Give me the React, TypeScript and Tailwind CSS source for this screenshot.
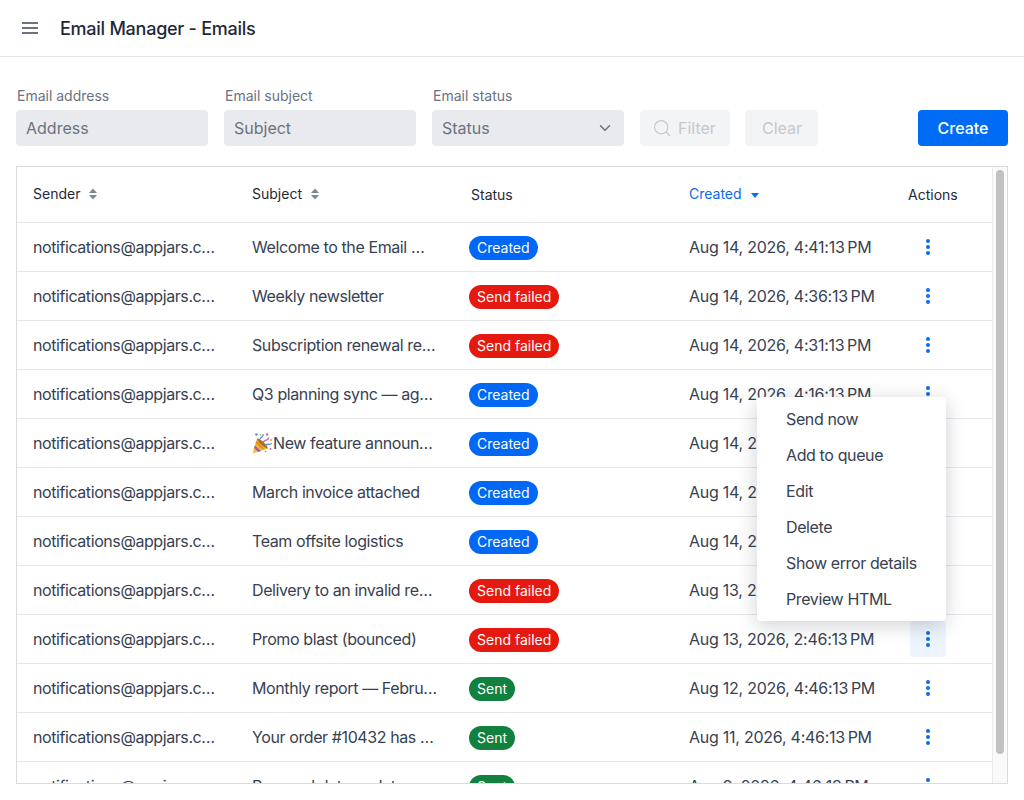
import { Search, ChevronDown } from "lucide-react";

function Popper() {
  return (
    <svg width="21" height="22" viewBox="0 0 21 22" className="-my-0.5 shrink-0">
      <path d="M0.5 21.5 L5 6.5 L16 16.5 Z" fill="#f5bc2f" />
      <path d="M3 13.5 L9 19 L6.5 20 L2 15.8 Z" fill="#9a5cc4" />
      <path d="M4.4 8.8 L12.5 16.6 L10.5 17.6 L3.7 11 Z" fill="#e58a2d" />
      <path d="M5 6.5 C8 6 15.5 13 16 16.5 C12.5 16.5 5.5 10 5 6.5 Z" fill="#a8702a" />
      <path d="M8 7 C9 4.5 12 5.5 11 2" fill="none" stroke="#4a8fe8" strokeWidth="1.3" />
      <path d="M11 10 C13 7.5 15.5 9 17 5.5" fill="none" stroke="#d85aa5" strokeWidth="1.3" />
      <path d="M13.5 13 C15.5 11.5 17 13 20 11.5" fill="none" stroke="#4a8fe8" strokeWidth="1.3" />
      <circle cx="4.5" cy="2.5" r="1.3" fill="#4a8fe8" />
      <circle cx="15" cy="2.5" r="1.2" fill="#d85aa5" />
      <circle cx="19" cy="8" r="1" fill="#e2a32e" />
      <circle cx="18.5" cy="17" r="1" fill="#d85aa5" />
      <circle cx="8.5" cy="2.8" r="0.9" fill="#e2a32e" />
      <circle cx="13.5" cy="19.5" r="0.8" fill="#4a8fe8" />
    </svg>
  );
}

function SortIcon() {
  return (
    <svg width="8" height="12" viewBox="0 0 8 12" className="ml-[9px]">
      <path d="M4 0.5 L8 5 H0 Z" fill="#7c8798" />
      <path d="M4 11.5 L8 7 H0 Z" fill="#7c8798" />
    </svg>
  );
}

function Dots() {
  return (
    <svg width="4" height="16" viewBox="0 0 4 16">
      <circle cx="2" cy="2" r="2" fill="#0a6cf0" />
      <circle cx="2" cy="8" r="2" fill="#0a6cf0" />
      <circle cx="2" cy="14" r="2" fill="#0a6cf0" />
    </svg>
  );
}

type Status = "Created" | "Send failed" | "Sent";

const rows: { subject: string; status: Status; date: string; emoji?: boolean; active?: boolean }[] = [
  { subject: "Welcome to the Email Manager", status: "Created", date: "Aug 14, 2026, 4:41:13\u202fPM" },
  { subject: "Weekly newsletter", status: "Send failed", date: "Aug 14, 2026, 4:36:13\u202fPM" },
  { subject: "Subscription renewal reminder", status: "Send failed", date: "Aug 14, 2026, 4:31:13\u202fPM" },
  { subject: "Q3 planning sync — agenda", status: "Created", date: "Aug 14, 2026, 4:16:13\u202fPM" },
  { subject: "New feature announcement", status: "Created", date: "Aug 14, 2026, 3:46:13\u202fPM", emoji: true },
  { subject: "March invoice attached", status: "Created", date: "Aug 14, 2026, 2:46:13\u202fPM" },
  { subject: "Team offsite logistics", status: "Created", date: "Aug 14, 2026, 1:46:13\u202fPM" },
  { subject: "Delivery to an invalid recipient", status: "Send failed", date: "Aug 13, 2026, 4:46:13\u202fPM" },
  { subject: "Promo blast (bounced)", status: "Send failed", date: "Aug 13, 2026, 2:46:13\u202fPM", active: true },
  { subject: "Monthly report — February", status: "Sent", date: "Aug 12, 2026, 4:46:13\u202fPM" },
  { subject: "Your order #10432 has shipped", status: "Sent", date: "Aug 11, 2026, 4:46:13\u202fPM" },
  { subject: "Personal data update", status: "Sent", date: "Aug 9, 2026, 4:46:13\u202fPM" },
];

function Badge({ status }: { status: Status }) {
  const cls =
    status === "Created" ? "bg-[#0068f5]" : status === "Sent" ? "bg-[#12803f]" : "bg-[#e5190f]";
  return (
    <span className={`inline-flex h-6 items-center rounded-full px-2 text-sm text-white ${cls}`}>
      {status}
    </span>
  );
}

const menuItems = ["Send now", "Add to queue", "Edit", "Delete", "Show error details", "Preview HTML"];

export default function App() {
  return (
    <div className="relative h-[800px] w-[1024px] overflow-hidden bg-white font-['Inter',sans-serif] text-[#1f2937]">
      <header className="flex h-[57px] items-center border-b border-[#e5e7eb] pl-[22px]">
        <svg width="16" height="14" viewBox="0 0 16 14">
          <path d="M0 2 H16 M0 7 H16 M0 12 H16" stroke="#6b7280" strokeWidth="2" />
        </svg>
        <h1 className="ml-[22px] pt-0.5 text-lg font-medium tracking-[-0.25px] text-[#1f2937]">Email Manager - Emails</h1>
      </header>

      <main className="px-4 pt-[29px]">
        <div className="flex items-end">
          <label className="w-[192px]">
            <div className="mb-[5px] pl-px text-sm leading-[19px] text-[#6b7280]">Email address</div>
            <div className="flex h-9 items-center rounded bg-[#e8eaee] px-[10px] text-base text-[#6b7280]">Address</div>
          </label>
          <label className="ml-4 w-[192px]">
            <div className="mb-[5px] pl-px text-sm leading-[19px] text-[#6b7280]">Email subject</div>
            <div className="flex h-9 items-center rounded bg-[#e8eaee] px-[10px] text-base text-[#6b7280]">Subject</div>
          </label>
          <label className="ml-4 w-[192px]">
            <div className="mb-[5px] pl-px text-sm leading-[19px] text-[#6b7280]">Email status</div>
            <div className="flex h-9 items-center justify-between rounded bg-[#e8eaee] pl-[10px] pr-[10px] text-base text-[#6b7280]">
              Status
              <ChevronDown size={18} strokeWidth={2} className="text-[#6b7280]" />
            </div>
          </label>
          <button className="ml-4 flex h-9 w-[90px] items-center gap-[6px] rounded bg-[#f3f4f6] pl-3 text-base text-[#c4c8cf]">
            <Search size={20} strokeWidth={1.5} />
            Filter
          </button>
          <button className="ml-[15px] flex h-9 w-[73px] items-center justify-center rounded bg-[#f3f4f6] pl-px text-base text-[#c4c8cf]">
            Clear
          </button>
          <button className="ml-auto flex h-9 w-[90px] items-center justify-center rounded bg-[#006bf5] text-base font-medium text-white">
            Create
          </button>
        </div>

        <div className="mt-5 flex h-[618px] overflow-hidden border border-[#d9dbdf]">
          <div className="min-w-0 flex-1">
            <div className="flex h-14 items-center border-b border-[#e5e7eb] text-sm">
              <div className="flex w-[219px] items-center pb-0.5 pl-4 text-[#1f2937]">
                <span>Sender</span>
                <SortIcon />
              </div>
              <div className="flex w-[219px] items-center pb-0.5 pl-4 text-[#1f2937]">
                <span>Subject</span>
                <SortIcon />
              </div>
              <div className="w-[218px] pl-4 text-[#1f2937]">Status</div>
              <div className="flex w-[219px] items-center pb-0.5 pl-4 text-[#0a6cf0]">
                <span>Created</span>
                <svg width="8" height="5" viewBox="0 0 8 5" className="ml-[9px] mt-1">
                  <path d="M0 0 H8 L4 5 Z" fill="#0a6cf0" />
                </svg>
              </div>
              <div className="pl-4 text-[#1f2937]">Actions</div>
            </div>
            {rows.map((r) => (
              <div key={r.subject} className="flex h-[49px] items-center border-b border-[#e5e7eb] text-base text-[#374151]">
                <div className="w-[219px] pl-4 pr-4 tracking-[-0.42px]">
                  <div className="truncate">notifications@appjars.com</div>
                </div>
                <div className="flex w-[219px] items-center pl-4 pr-[17px] tracking-[-0.4px]">
                  {r.emoji && <Popper />}
                  <div className="min-w-0 truncate">{r.subject}</div>
                </div>
                <div className="w-[218px] pl-[14px]">
                  <Badge status={r.status} />
                </div>
                <div className="w-[219px] whitespace-nowrap pl-4 tracking-[-0.25px]">{r.date}</div>
                <div
                  className={`ml-[18px] flex h-9 w-9 items-center justify-center rounded ${r.active ? "bg-[#eef4fd]" : ""}`}
                >
                  <Dots />
                </div>
              </div>
            ))}
          </div>
          <div className="w-[15px] shrink-0 border-l border-[#ebebeb] bg-[#fafafa] px-[3px] pt-[3px]">
            <div className="h-[584px] rounded-full bg-[#c1c1c1]" />
          </div>
        </div>
      </main>

      <div className="absolute left-[757px] top-[397px] w-[189px] rounded bg-white py-1 shadow-[0_4px_20px_rgba(31,41,55,0.22)]">
        {menuItems.map((m) => (
          <div key={m} className="flex h-9 items-center pl-[29px] text-base tracking-[-0.38px] text-[#374151]">
            {m}
          </div>
        ))}
      </div>
    </div>
  );
}
